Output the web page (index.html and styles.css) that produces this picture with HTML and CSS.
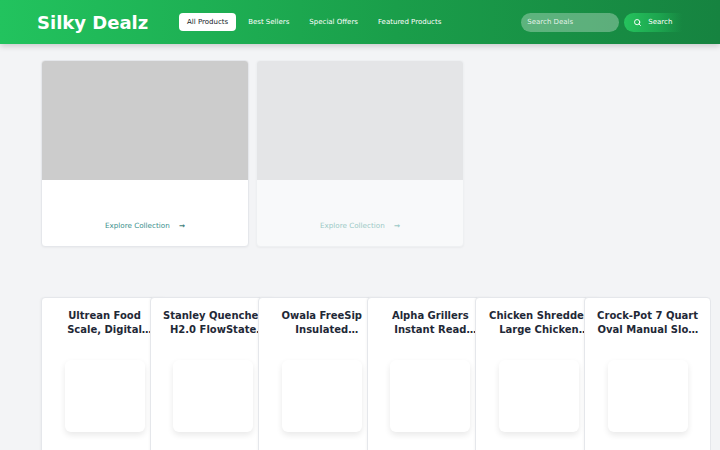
FILE: index.html
```html
<!DOCTYPE html>
<html>
<head>
<meta charset="utf-8">
<link rel="stylesheet" href="styles.css">
</head>
<body>
<header class="topbar">
  <div class="brand">Silky Dealz</div>
  <nav class="nav">
    <a class="nav-item active">All Products</a>
    <a class="nav-item">Best Sellers</a>
    <a class="nav-item">Special Offers</a>
    <a class="nav-item">Featured Products</a>
  </nav>
  <div class="search">
    <div class="search-input">Search Deals</div>
    <button class="search-btn">
      <svg width="9" height="9" viewBox="0 0 24 24" fill="none" stroke="#fff" stroke-width="2.5" stroke-linecap="round"><circle cx="11" cy="11" r="7"/><path d="M20 20l-4-4"/></svg>
      <span>Search</span>
    </button>
  </div>
</header>

<main class="main">
  <section class="collections">
    <div class="coll-card">
      <div class="coll-img"></div>
      <div class="coll-body">
        <span class="coll-link">Explore Collection <span class="arrow">→</span></span>
      </div>
    </div>
    <div class="coll-card faded">
      <div class="coll-img"></div>
      <div class="coll-body">
        <span class="coll-link">Explore Collection <span class="arrow">→</span></span>
      </div>
    </div>
  </section>

  <section class="products">
    <div class="prod-card"><div class="prod-title">Ultrean Food Scale, Digital Kitchen Scale</div><div class="prod-img"></div></div>
    <div class="prod-card"><div class="prod-title">Stanley Quencher H2.0 FlowState Tumbler</div><div class="prod-img"></div></div>
    <div class="prod-card"><div class="prod-title">Owala FreeSip Insulated Stainless Steel</div><div class="prod-img"></div></div>
    <div class="prod-card"><div class="prod-title">Alpha Grillers Instant Read Meat Thermometer</div><div class="prod-img"></div></div>
    <div class="prod-card"><div class="prod-title">Chicken Shredder Large Chicken Breast Shredder</div><div class="prod-img"></div></div>
    <div class="prod-card"><div class="prod-title">Crock-Pot 7 Quart Oval Manual Slow Cooker</div><div class="prod-img"></div></div>
  </section>
</main>
</body>
</html>
```

FILE: styles.css
```css
* { box-sizing: border-box; }
html, body { margin: 0; padding: 0; }
body {
  background: #f3f4f6;
  font-family: "DejaVu Sans", "Liberation Sans", sans-serif;
  color: #1f2937;
  overflow: hidden;
  height: 450px;
}
.topbar {
  height: 44px;
  display: flex;
  align-items: center;
  padding: 0 0 0 37px;
  background: linear-gradient(90deg, #22c35e 0%, #1a9e4a 55%, #168340 100%);
  box-shadow: 0 2px 6px rgba(0,0,0,0.18);
  position: relative;
  z-index: 2;
}
.brand {
  color: #fff;
  font-weight: bold;
  font-size: 18px;
  width: 142px;
  flex: none;
}
.nav {
  display: flex;
  gap: 4px;
}
.nav-item {
  font-size: 7px;
  color: #fff;
  padding: 0 8px;
  height: 18px;
  line-height: 18px;
  border-radius: 4px;
}
.nav-item.active {
  background: #fff;
  color: #111827;
}
.search {
  margin-left: 72px;
  display: flex;
  align-items: center;
  gap: 5px;
}
.search-input {
  width: 98px;
  height: 19px;
  line-height: 19px;
  border-radius: 10px;
  background: rgba(255,255,255,0.3);
  color: rgba(255,255,255,0.85);
  font-size: 7px;
  padding-left: 6px;
}
.search-btn {
  height: 19px;
  width: 58px;
  border: none;
  border-radius: 10px 0 0 10px;
  background: linear-gradient(90deg, #25c35d 0%, #1da54f 60%, rgba(26,150,70,0) 100%);
  color: #fff;
  font-family: inherit;
  font-size: 7px;
  display: flex;
  align-items: center;
  gap: 6px;
  padding: 0 0 0 9px;
}
.main {
  padding: 16px 0 0 41px;
}
.collections {
  display: flex;
  gap: 7px;
}
.coll-card {
  width: 208px;
  height: 187px;
  background: #fff;
  border: 1px solid #e5e7eb;
  border-radius: 4px;
  overflow: hidden;
  box-shadow: 0 1px 2px rgba(0,0,0,0.04);
  display: flex;
  flex-direction: column;
}
.coll-img {
  height: 119px;
  background: #cccccc;
}
.coll-body {
  flex: 1;
  display: flex;
  justify-content: center;
  align-items: flex-end;
  padding-bottom: 16px;
}
.coll-link {
  font-size: 7.2px;
  color: #3a8f8c;
}
.arrow {
  margin-left: 7px;
  font-weight: bold;
  color: #3f7f7b;
}
.coll-card.faded {
  background: #f8f9fa;
  border-color: #eef0f2;
}
.coll-card.faded .coll-img { background: #e4e5e7; }
.coll-card.faded .coll-link,
.coll-card.faded .arrow { color: #9cc9c6; }

.products {
  display: flex;
  margin-top: 50px;
}
.prod-card {
  width: 127px;
  flex: none;
  height: 200px;
  margin-right: -18.4px;
  background: #fff;
  border: 1px solid #e5e7eb;
  border-radius: 4px 4px 0 0;
  padding: 11px 4px 0;
  display: flex;
  flex-direction: column;
  align-items: center;
  box-shadow: -1px 0 2px rgba(0,0,0,0.03);
}
.prod-title {
  font-size: 10px;
  font-weight: bold;
  line-height: 14px;
  text-align: center;
  color: #1f2937;
  width: 103px;
  display: -webkit-box;
  -webkit-line-clamp: 2;
  -webkit-box-orient: vertical;
  overflow: hidden;
  height: 28px;
}
.prod-img {
  margin-top: 23px;
  width: 80px;
  height: 72px;
  background: #fff;
  border-radius: 6px;
  box-shadow: 0 3px 6px rgba(0,0,0,0.09);
}
```
